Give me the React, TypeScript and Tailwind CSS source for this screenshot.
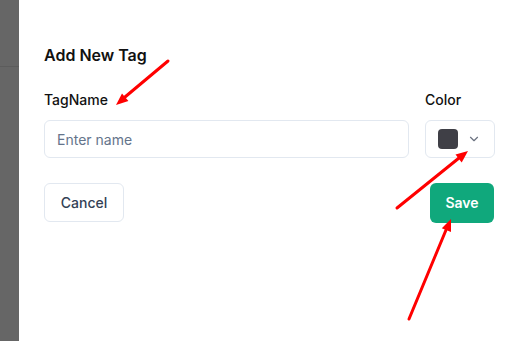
import { ChevronDown } from 'lucide-react';

function Arrows() {
  return (
    <svg
      className="pointer-events-none absolute left-0 top-0"
      width={511}
      height={341}
      viewBox="0 0 511 341"
    >
      <g stroke="#ff0000" strokeWidth={3} strokeLinecap="round" fill="#ff0000">
        <line x1={168} y1={61} x2={125} y2={97} />
        <polygon points="116,105 128.4,101.1 122,93.4" stroke="none" />
        <line x1={397} y1={208} x2={459} y2={158} />
        <polygon points="468,151 455.5,154.6 461.7,162.4" stroke="none" />
        <line x1={409} y1={319} x2={446} y2={230} />
        <polygon points="451,219 451,232 441.8,228.2" stroke="none" />
      </g>
    </svg>
  );
}

export default function App() {
  return (
    <div
      className="relative flex h-[341px] w-[511px] overflow-hidden bg-white"
      style={{ fontFamily: 'Inter, "Noto Sans", sans-serif' }}
    >
      {/* Backdrop strip */}
      <div className="w-[19px] shrink-0 bg-[#666666]">
        <div className="h-[67px] border-b border-[#5c5c5c]" />
      </div>

      {/* Dialog */}
      <div className="flex-1 bg-white pl-[25px] pr-[16px] pt-[43px]">
        <h2 className="mb-[23px] text-base font-semibold leading-6 text-[#111111]">Add New Tag</h2>

        <div className="flex gap-4">
          <div className="flex flex-1 flex-col">
            <label className="mb-[10px] text-sm font-medium leading-5 text-[#111111]">TagName</label>
            <input
              type="text"
              placeholder="Enter name"
              className="h-[38px] rounded-md border border-[#e2e8f0] px-[12px] text-sm text-gray-900 placeholder-[#64748b] outline-none"
            />
          </div>
          <div className="flex flex-col">
            <label className="mb-[10px] text-sm font-medium leading-5 text-[#111111]">Color</label>
            <button className="flex h-[38px] w-[70px] items-center gap-[9px] rounded-md border border-[#e2e8f0] pl-[12px]">
              <span className="h-5 w-5 rounded-[4px] bg-[#3f3f46]" />
              <ChevronDown size={14} className="text-[#6b7280]" />
            </button>
          </div>
        </div>

        <div className="mt-[25px] flex items-start justify-between">
          <button className="h-[39px] w-[80px] rounded-md border border-[#e2e8f0] text-sm font-medium text-[#334155]">
            Cancel
          </button>
          <button className="mr-[1px] h-10 w-16 rounded-md bg-[#10a87c] text-sm font-semibold text-white">
            Save
          </button>
        </div>
      </div>

      <Arrows />
    </div>
  );
}
